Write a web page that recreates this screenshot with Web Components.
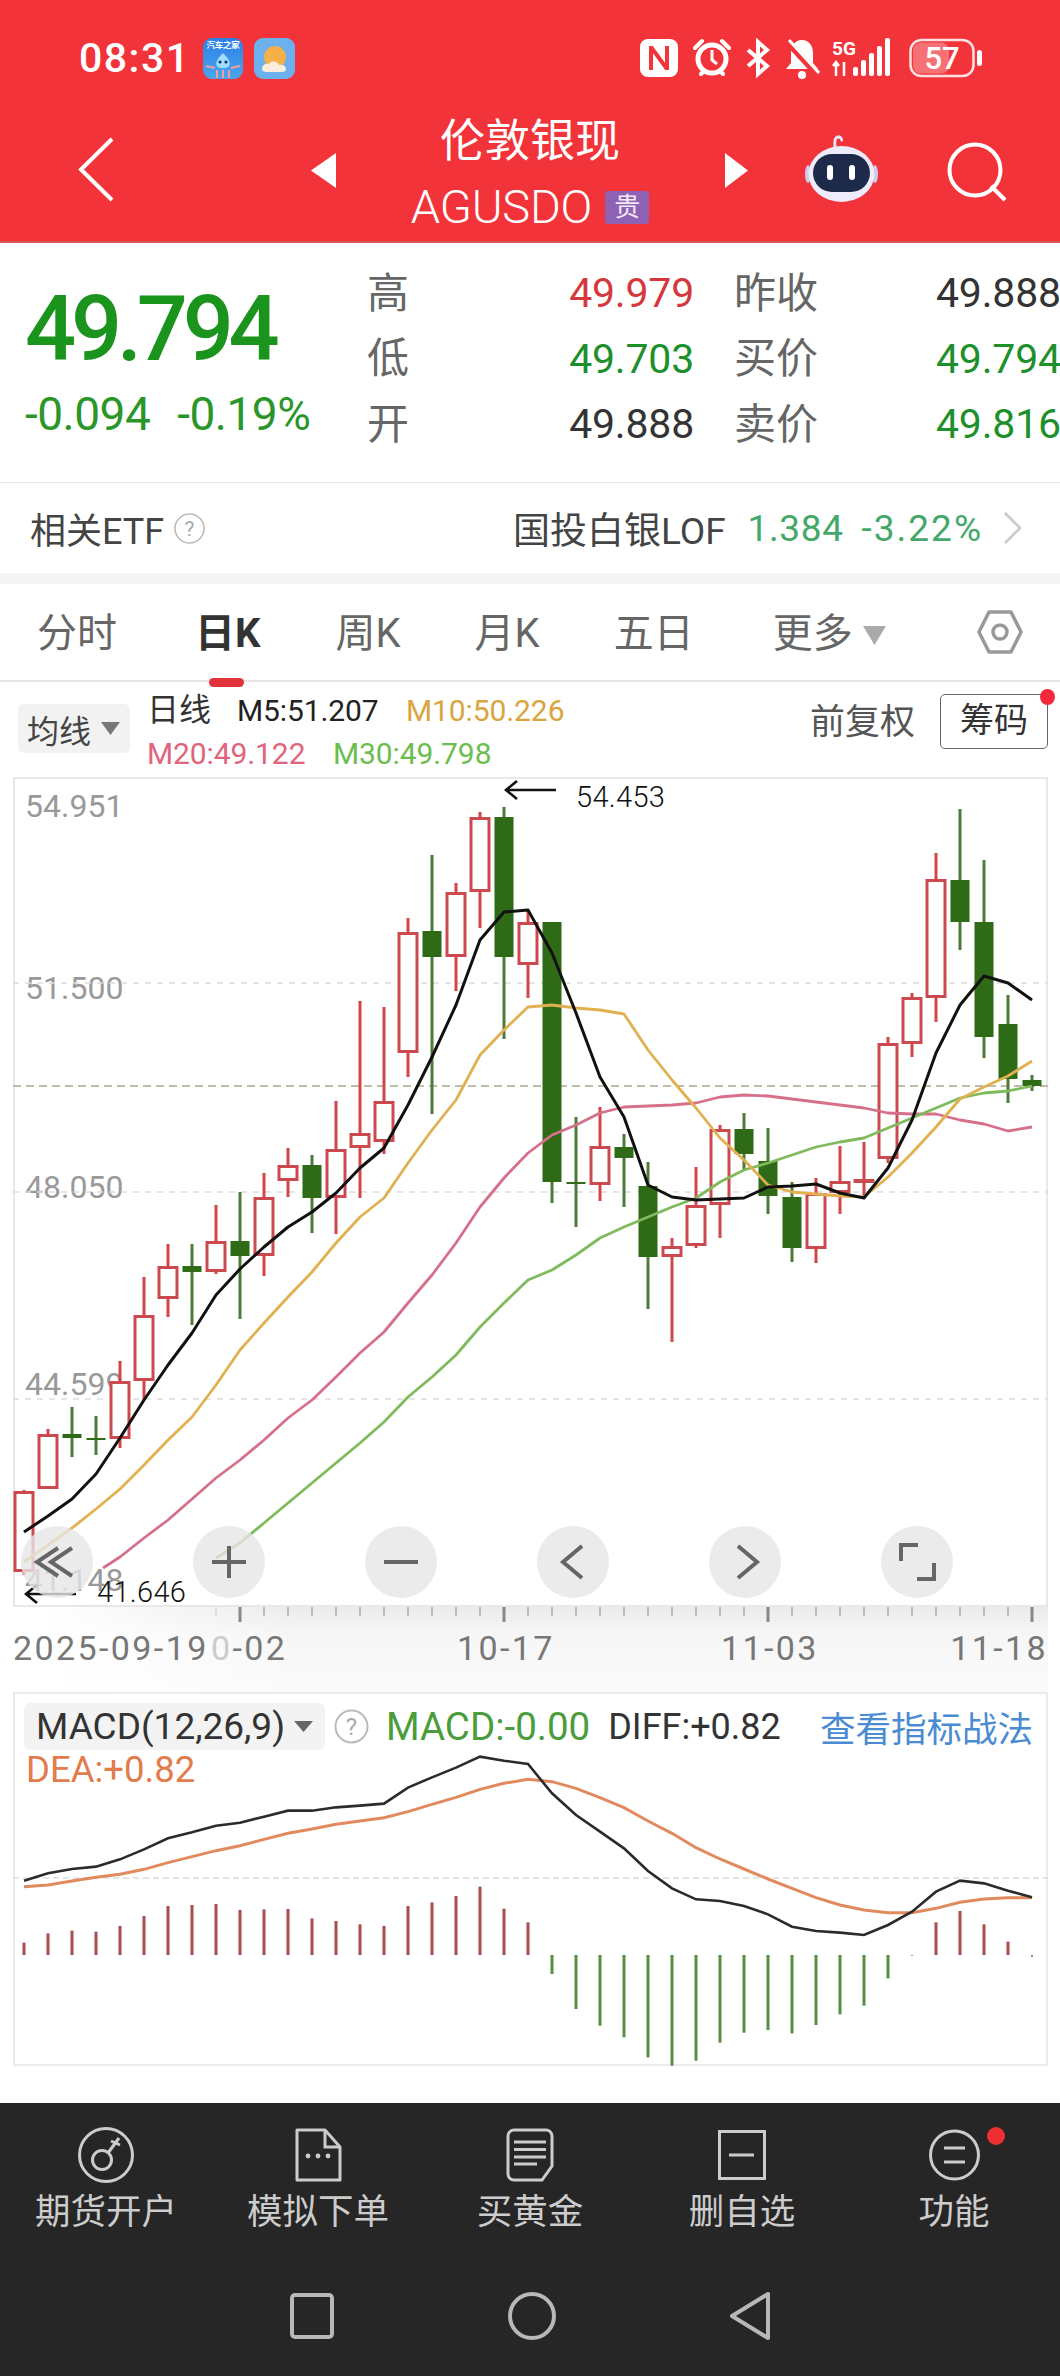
<!DOCTYPE html>
<html lang="zh">
<head>
<meta charset="utf-8">
<title>AGUSDO</title>
<style>
  html, body { margin: 0; padding: 0; background: #fff; }
  body { width: 1060px; height: 2376px; overflow: hidden; font-family: Roboto, "Noto Sans CJK SC", sans-serif; }
</style>
</head>
<body>
<app-header></app-header>
<quote-panel></quote-panel>
<etf-row></etf-row>
<period-tabs></period-tabs>
<ma-legend></ma-legend>
<kline-chart></kline-chart>
<date-axis></date-axis>
<macd-panel></macd-panel>
<bottom-tools></bottom-tools>
<system-nav></system-nav>

<script>
// every element just gets its css + markup in an open shadow root
class Box extends HTMLElement {
  constructor(css, html) {
    super();
    const shadow = this.attachShadow({mode: 'open'});
    const newStyle = document.createElement('style');
    newStyle.textContent = `:host { box-sizing: border-box; } * { box-sizing: border-box; margin: 0; padding: 0; font-family: Roboto, "Noto Sans CJK SC", sans-serif; }` + css;
    shadow.appendChild(newStyle);
    const holder = document.createElement('template');
    holder.innerHTML = html;
    shadow.appendChild(holder.content);
  }
}

const slot = (n) => 24 + 24 * n;   // x of candle n on the page
const poly = (start, ys) => ys.map((y, i) => slot(start + i) + ',' + y).join(' ');

class AppHeader extends Box {
  constructor() {
    super(`
      :host { display: block; height: 243px; background: #f2343a; color: #fff; border-bottom: 2px solid #d8555a; }
      .status { height: 100px; display: flex; align-items: center; padding: 16px 76px 0 79px; }
      .time { font-size: 41px; font-weight: 500; letter-spacing: 1.5px; line-height: 1; width: 124px; }
      .apps { display: flex; gap: 11px; }
      .right { margin-left: auto; display: flex; align-items: center; }
      .car { width: 40px; height: 41px; border-radius: 9px; background: linear-gradient(#2d7fe6, #4aa6ee); position: relative; overflow: hidden; font-size: 8.5px; font-weight: 700; text-align: center; line-height: 15px; letter-spacing: -.3px; }
      .nav { height: 141px; display: flex; align-items: flex-start; padding-left: 78px; }
      .back { width: 233px; padding-top: 37px; }
      .tri-l { width: 100px; padding-top: 53px; }
      .mid { width: 238px; text-align: center; display: flex; flex-direction: column; align-items: center; }
      .title { font-size: 45px; line-height: 44px; margin-top: 20px; }
      .code { display: flex; align-items: center; gap: 13px; margin-top: 25px; height: 36px; white-space: nowrap; }
      .code b { font-weight: 300; font-size: 47px; line-height: 36px; letter-spacing: -.2px; }
      .tag { width: 44px; height: 33px; background: #8d62b5; border-radius: 3px; font-size: 26px; line-height: 33px; color: #f3e9f7; }
      .tri-r { margin-left: 76px; width: 80px; padding-top: 53px; }
      .bot { width: 142px; padding-top: 34px; }
      .search { padding-top: 42px; }
      svg { display: block; }
    `, `
      <div class="status">
        <span class="time">08:31</span>
        <div class="apps">
          <div class="car">汽车之家
            <svg width="40" height="26" viewBox="0 0 40 26" style="position:absolute;left:0;top:15px"><path d="M20 0c6 6 8 10 6 13-2 3-10 3-12 0-2-3 0-7 6-13z" fill="#9fdcff"/><path d="M3 13l9 2M37 13l-9 2M14 17v8M20 17v8M26 17v8" stroke="#f2a0a0" stroke-width="2"/><circle cx="17" cy="9" r="1.6" fill="#12386a"/><circle cx="23" cy="9" r="1.6" fill="#12386a"/></svg>
          </div>
          <svg width="41" height="41" viewBox="0 0 41 41"><rect width="41" height="41" rx="9" fill="#6cb0ee"/><circle cx="21" cy="19" r="11" fill="#f6b04a"/><path d="M8 31c0-4 4-6 7-5 2-4 9-3 10 1 4-1 7 1 7 4 0 2-2 3-4 3H12c-2 0-4-1-4-3z" fill="#fbeedc"/></svg>
        </div>
        <div class="right">
          <svg width="38" height="40" viewBox="0 0 38 40" style="margin-right:15px"><rect x="0" y="1" width="38" height="38" rx="8" fill="#fff"/><path d="M11 8v24M27 8v24M11 9l16 22" fill="none" stroke="#f2343a" stroke-width="4"/></svg>
          <svg width="38" height="40" viewBox="0 0 38 40" style="margin-right:14px"><circle cx="19" cy="21" r="14" fill="none" stroke="#fff" stroke-width="5"/><path d="M19 12v10l5 4" fill="none" stroke="#fff" stroke-width="3"/><path d="M2 10l7-7M36 10l-7-7M8 36l3-3M30 36l-3-3" stroke="#fff" stroke-width="4" stroke-linecap="round"/></svg>
          <svg width="26" height="40" viewBox="0 0 26 40" style="margin-right:13px"><path d="M3 12l19 16-9 8V4l9 8L3 28" fill="none" stroke="#fff" stroke-width="4"/></svg>
          <svg width="36" height="42" viewBox="0 0 36 42" style="margin-right:12px"><path d="M18 3c7 0 11 6 11 13v10l5 6H2l5-6V16C7 9 11 3 18 3z" fill="#fff"/><circle cx="18" cy="38" r="4" fill="#fff"/><path d="M2 3l31 34" stroke="#f2343a" stroke-width="7"/><path d="M5 3l30 33" stroke="#fff" stroke-width="3"/></svg>
          <svg width="61" height="40" viewBox="0 0 61 40" style="margin-right:16px">
            <text x="0" y="17" font-size="19" font-weight="700" fill="#fff" font-family="Roboto">5G</text>
            <path d="M4 24v14M1 28l3-4 3 4M12 24v14" stroke="#fff" stroke-width="2.5" fill="none"/>
            <rect x="21" y="29" width="5" height="9" rx="2" fill="#fff"/><rect x="29" y="22" width="5" height="16" rx="2" fill="#fff"/><rect x="37" y="15" width="5" height="23" rx="2" fill="#fff"/><rect x="45" y="8" width="5" height="30" rx="2" fill="#fff"/><rect x="53" y="0" width="5" height="38" rx="2" fill="#fff"/>
          </svg>
          <svg width="75" height="40" viewBox="0 0 75 40">
            <rect x="1.5" y="2" width="63" height="36" rx="11" fill="none" stroke="#fff" stroke-width="2.5" opacity=".85"/>
            <rect x="4" y="4.5" width="36" height="31" rx="8" fill="#fff" opacity=".3"/>
            <text x="33" y="31" text-anchor="middle" font-size="31" font-weight="500" fill="#fff" font-family="Roboto">57</text>
            <rect x="68" y="12" width="5" height="16" rx="2.5" fill="#fff"/>
          </svg>
        </div>
      </div>
      <div class="nav">
        <div class="back"><svg width="36" height="65" viewBox="0 0 36 65"><path d="M34 2L3 32.5 34 63" fill="none" stroke="#fff" stroke-width="4"/></svg></div>
        <div class="tri-l"><svg width="25" height="35" viewBox="0 0 25 35"><path d="M25 0v35L0 17.5z" fill="#fff"/></svg></div>
        <div class="mid">
          <div class="title">伦敦银现</div>
          <div class="code"><b>AGUSDO</b><span class="tag">贵</span></div>
        </div>
        <div class="tri-r"><svg width="23" height="35" viewBox="0 0 23 35"><path d="M0 0v35l23-17.5z" fill="#fff"/></svg></div>
        <div class="bot"><svg width="73" height="68" viewBox="0 0 73 68">
          <path d="M30 14c0-5-1-8 1-10 3-3 7 1 5 3" fill="none" stroke="#e6e4f6" stroke-width="3"/>
          <ellipse cx="3" cy="40" rx="3" ry="9" fill="#cfcbee"/><ellipse cx="70" cy="40" rx="3" ry="9" fill="#cfcbee"/>
          <ellipse cx="36.5" cy="40" rx="33" ry="28" fill="#eeecfb"/>
          <rect x="8" y="20" width="57" height="38" rx="19" fill="#1d2a4a"/>
          <rect x="22" y="31" width="6" height="15" rx="3" fill="#fff"/><rect x="44" y="31" width="6" height="15" rx="3" fill="#fff"/>
        </svg></div>
        <div class="search"><svg width="60" height="60" viewBox="0 0 60 60"><circle cx="28" cy="28" r="25.5" fill="none" stroke="#fff" stroke-width="4"/><path d="M44 44l14 14" stroke="#fff" stroke-width="4"/></svg></div>
      </div>
    `);
  }
}

class QuotePanel extends Box {
  constructor() {
    super(`
      :host { display: flex; height: 240px; padding-left: 25px; background: #fff; border-bottom: 1px solid #e6e6e6; overflow: hidden; }
      .now { width: 342px; flex: none; padding-top: 37px; color: #1a941c; }
      .price { font-size: 90px; font-weight: 500; line-height: 100px; letter-spacing: -5.2px; }
      .diff { display: flex; gap: 27px; font-size: 46px; line-height: 48px; margin-top: 10px; letter-spacing: -.5px; color: #2a962a; }
      .grid { display: grid; grid-template-columns: 60px 267px 242px 124px; grid-auto-rows: 65.5px; padding: 18px 0 0 0; align-items: center; }
      .l { font-size: 42px; color: #666; line-height: 1; }
      .v { font-size: 41px; text-align: right; letter-spacing: -.2px; line-height: 1; }
      .lb { margin-left: 40px; white-space: nowrap; }
      .vb { text-align: left; white-space: nowrap; }
      .red { color: #d5383c; } .grn { color: #1d8f2b; } .blk { color: #333; }
    `, `
      <div class="now">
        <div class="price">49.794</div>
        <div class="diff"><span>-0.094</span><span>-0.19%</span></div>
      </div>
      <div class="grid">
        <span class="l">高</span><span class="v red">49.979</span><span class="l lb">昨收</span><span class="v vb blk">49.888</span>
        <span class="l">低</span><span class="v grn">49.703</span><span class="l lb">买价</span><span class="v vb grn">49.794</span>
        <span class="l">开</span><span class="v blk">49.888</span><span class="l lb">卖价</span><span class="v vb grn">49.816</span>
      </div>
    `);
  }
}

class EtfRow extends Box {
  constructor() {
    super(`
      :host { display: flex; align-items: center; height: 101px; padding: 0 38px 0 30px; border-bottom: 11px solid #f4f4f4; font-size: 36px; color: #444; }
      .help { margin-left: 10px; }
      .name { margin-left: auto; font-size: 37px; }
      .num { margin-left: 22px; color: #44a86a; font-size: 37px; letter-spacing: .6px; }
      .pct { margin-left: 18px; color: #44a86a; font-size: 37px; letter-spacing: 2px; }
      .arr { margin-left: 21px; }
    `, `
      <span>相关ETF</span>
      <svg class="help" width="31" height="31" viewBox="0 0 31 31"><circle cx="15.5" cy="15.5" r="14.5" fill="none" stroke="#bbb" stroke-width="1.6"/><text x="15.5" y="23" text-anchor="middle" font-size="21" fill="#aaa" font-family="Roboto">?</text></svg>
      <span class="name">国投白银LOF</span>
      <span class="num">1.384</span>
      <span class="pct">-3.22%</span>
      <svg class="arr" width="18" height="32" viewBox="0 0 18 32"><path d="M1 1l15 15L1 31" fill="none" stroke="#ccc" stroke-width="3"/></svg>
    `);
  }
}

class PeriodTabs extends Box {
  constructor() {
    super(`
      :host { display: flex; align-items: center; position: relative; height: 98px; padding: 0 37px 0 37px; border-bottom: 2px solid #e4e4e4; font-size: 40px; color: #666; }
      span { line-height: 1; padding-top: 4px; }
      .on { font-weight: 700; color: #333; margin-left: 78px; position: relative; }
      .on::after { content: ""; position: absolute; left: 14px; width: 35px; height: 9px; bottom: -33px; border-radius: 5px; background: #e0343a; }
      .t3 { margin-left: 75px; } .t4 { margin-left: 74px; } .t5 { margin-left: 74px; } .t6 { margin-left: 79px; }
      .drop { margin-left: 10px; margin-top: 6px; }
      .hex { margin-left: auto; }
    `, `
      <span>分时</span>
      <span class="on">日K</span>
      <span class="t3">周K</span>
      <span class="t4">月K</span>
      <span class="t5">五日</span>
      <span class="t6">更多</span>
      <svg class="drop" width="23" height="19" viewBox="0 0 23 19"><path d="M0 0h23L11.5 19z" fill="#aaa"/></svg>
      <svg class="hex" width="46" height="46" viewBox="0 0 46 46"><path d="M12 3h22l10 20-10 20H12L2 23z" fill="none" stroke="#999" stroke-width="3.5" stroke-linejoin="round"/><circle cx="23" cy="23" r="7" fill="none" stroke="#999" stroke-width="3.5"/></svg>
    `);
  }
}

class MaLegend extends Box {
  constructor() {
    super(`
      :host { display: flex; height: 95px; padding: 0 12px 0 18px; position: relative; }
      .kind { width: 112px; height: 49px; margin-top: 22px; padding-left: 9px; border-radius: 6px; background: #f2f2f2; display: flex; align-items: center; gap: 10px; font-size: 32px; color: #444; }
      .vals { margin-left: 17px; padding-top: 7px; font-size: 30px; line-height: 43px; }
      .row { display: flex; white-space: nowrap; letter-spacing: -.1px; }
      .d { font-size: 32px; color: #333; width: 90px; }
      .m5 { color: #222; width: 169px; } .m10 { color: #d9a441; }
      .m20 { color: #e0647c; width: 186px; } .m30 { color: #6cbd4f; }
      .fq { margin-left: auto; margin-top: 17px; font-size: 35px; line-height: 48px; height: 48px; color: #555; }
      .chip { margin: 12px 0 0 25px; width: 108px; height: 55px; border: 1.5px solid #666; border-radius: 5px; font-size: 34px; line-height: 50px; text-align: center; color: #333; position: relative; }
      .chip::after { content: ""; position: absolute; top: -6px; right: -8px; width: 15px; height: 16px; border-radius: 50%; background: #f2293a; }
    `, `
      <div class="kind">均线<svg width="19" height="13" viewBox="0 0 19 13"><path d="M0 0h19L9.5 13z" fill="#777"/></svg></div>
      <div class="vals">
        <div class="row"><span class="d">日线</span><span class="m5">M5:51.207</span><span class="m10">M10:50.226</span></div>
        <div class="row"><span class="m20">M20:49.122</span><span class="m30">M30:49.798</span></div>
      </div>
      <span class="fq">前复权</span>
      <div class="chip">筹码</div>
    `);
  }
}

// [colour, high, body top, body bottom, low] in page pixels
const candles = [
  ['r',1490,1491,1572,1575],['r',1429,1434,1489,1489],['g',1407,1434,1438,1457],['g',1416,1438,1440,1455],
  ['r',1361,1381,1439,1448],['r',1277,1315,1381,1400],['r',1244,1266,1299,1317],['g',1244,1266,1272,1325],
  ['r',1205,1241,1272,1274],['g',1192,1241,1256,1319],['r',1173,1197,1256,1276],['r',1148,1165,1181,1197],
  ['g',1155,1165,1198,1233],['r',1101,1149,1198,1234],['r',1001,1133,1148,1198],['r',1007,1101,1142,1154],
  ['r',918,932,1053,1077],['g',855,931,957,1114],['r',883,892,957,991],['r',812,817,892,928],
  ['g',807,817,957,1039],['r',910,922,965,998],['g',922,922,1182,1203],['g',1117,1182,1183,1227],
  ['r',1107,1146,1185,1201],['g',1134,1147,1158,1207],['g',1162,1186,1257,1309],['r',1238,1246,1257,1342],
  ['r',1167,1205,1246,1248],['r',1125,1129,1205,1238],['g',1113,1129,1154,1170],['g',1128,1161,1196,1214],
  ['g',1182,1197,1248,1262],['r',1178,1193,1249,1263],['r',1146,1181,1193,1214],['r',1142,1179,1181,1197],
  ['r',1037,1043,1159,1163],['r',993,997,1044,1057],['r',853,879,998,1022],['g',809,880,922,950],
  ['g',860,922,1037,1058],['g',995,1024,1079,1103],['g',1075,1080,1086,1091]
];
const ma5 = [1532,1516,1499,1474,1438,1400,1365,1333,1295,1269,1247,1227,1212,1193,1168,1148,1105,1057,1005,940,912,910,953,1013,1077,1117,1185,1197,1200,1199,1198,1187,1186,1184,1193,1198,1168,1120,1053,1005,976,983,1000];
const ma10 = [1562,1545,1528,1509,1489,1465,1440,1417,1385,1350,1323,1297,1272,1243,1217,1198,1163,1130,1100,1055,1030,1007,1005,1008,1010,1014,1050,1080,1108,1138,1160,1185,1192,1194,1196,1197,1177,1153,1127,1099,1087,1076,1061];
const ma20 = [1557,1538,1520,1499,1478,1460,1440,1418,1400,1377,1353,1332,1303,1275,1243,1207,1178,1153,1135,1125,1113,1107,1106,1105,1103,1097,1095,1096,1099,1102,1105,1108,1113,1114,1114,1120,1124,1131,1127];
const ma30 = [1558,1543,1523,1503,1483,1463,1443,1422,1397,1377,1355,1327,1303,1280,1270,1255,1238,1227,1217,1207,1198,1182,1170,1163,1155,1147,1142,1138,1128,1118,1108,1098,1093,1091,1086];

class KlineChart extends Box {
  constructor() {
    let marks = '';
    candles.forEach((c, i) => {
      const x = slot(i), red = c[0] === 'r';
      marks += `<line x1="${x}" x2="${x}" y1="${c[1]}" y2="${c[4]}" stroke="${red ? '#d2464a' : '#4f7a3a'}" stroke-width="3"/>`;
      if (red) marks += `<rect x="${x - 9}" y="${c[2] + 1.5}" width="18" height="${Math.max(c[3] - c[2] - 3, 1)}" fill="#fff" stroke="#cb4a4f" stroke-width="3"/>`;
      else marks += `<rect x="${x - 9.5}" y="${c[2]}" width="19" height="${Math.max(c[3] - c[2], 2)}" fill="#2f6a17"/>`;
    });
    const btn = (x, path) => `<svg class="btn" style="left:${x - 36 - 15}px" width="72" height="72" viewBox="0 0 72 72"><circle cx="36" cy="36" r="36" fill="#e6e6e6" fill-opacity=".8"/><path d="${path}" fill="none" stroke="#666" stroke-width="4"/></svg>`;
    super(`
      :host { display: block; position: relative; height: 830px; margin: 0 12px 0 13px; border: 2px solid #e8e8e8; }
      svg.plot { position: absolute; left: -2px; top: -2px; z-index: 1; }
      .y { position: absolute; left: 10px; font-size: 32px; line-height: 32px; color: #999; z-index: 0; }
      .tip { position: absolute; font-size: 29px; line-height: 30px; color: #111; font-weight: 300; z-index: 2; letter-spacing: .3px; }
      .btn { position: absolute; top: 747px; z-index: 2; }
      .arrow { position: absolute; z-index: 2; }
    `, `
      <span class="y" style="top:11px">54.951</span>
      <span class="y" style="top:193px">51.500</span>
      <span class="y" style="top:392px">48.050</span>
      <span class="y" style="top:589px">44.599</span>
      <span class="y" style="top:785px">41.148</span>
      <svg class="plot" width="1035" height="830" viewBox="13 777 1035 830">
        <line x1="13" x2="1048" y1="983" y2="983" stroke="#ddd" stroke-width="1.5" stroke-dasharray="6 6"/>
        <line x1="13" x2="1048" y1="1192" y2="1192" stroke="#ddd" stroke-width="1.5" stroke-dasharray="6 6"/>
        <line x1="13" x2="1048" y1="1399" y2="1399" stroke="#ddd" stroke-width="1.5" stroke-dasharray="6 6"/>
        <line x1="13" x2="1048" y1="1086" y2="1086" stroke="#aaa68e" stroke-width="1.6" stroke-dasharray="8 5"/>
        ${marks}
        <g fill="none" stroke-linejoin="round">
          <polyline points="103,1568 ${poly(4, ma20)}" stroke="#d6708a" stroke-width="2.8"/>
          <polyline points="${poly(8, ma30)}" stroke="#7fba5c" stroke-width="2.8"/>
          <polyline points="${poly(0, ma10)}" stroke="#e1b050" stroke-width="2.8"/>
          <polyline points="${poly(0, ma5)}" stroke="#111" stroke-width="3"/>
        </g>
      </svg>
      <svg class="arrow" style="left:489px;top:0" width="52" height="22" viewBox="0 0 52 22"><path d="M52 11H3M13 2L2 11l11 9" fill="none" stroke="#111" stroke-width="2.6"/></svg>
      <span class="tip" style="left:561px;top:3px">54.453</span>
      <svg class="arrow" style="left:9px;top:804px" width="52" height="22" viewBox="0 0 52 22"><path d="M52 11H3M13 2L2 11l11 9" fill="none" stroke="#111" stroke-width="2.6"/></svg>
      <span class="tip" style="left:82px;top:798px">41.646</span>
      ${btn(57, 'M51 22L30 36 51 50M37 22L16 36 37 50')}
      ${btn(229, 'M36 20v32M19 36h34')}
      ${btn(401, 'M19 36h34')}
      ${btn(573, 'M45 20L26 36l19 16')}
      ${btn(745, 'M29 20l19 16-19 16')}
      ${btn(917, 'M20 35V19h17M53 37v16H36')}
    `);
  }
}

class DateAxis extends Box {
  constructor() {
    let ticks = '';
    for (let n = 8; n <= 42; n++) {
      const major = n === 9 || n === 20 || n === 31 || n === 42;
      const op = n === 8 ? .35 : 1;
      ticks += `<line x1="${slot(n)}" x2="${slot(n)}" y1="0" y2="${major ? 15 : 9}" stroke="${major ? '#888' : '#aaa'}" stroke-width="${major ? 3 : 1.5}" opacity="${op}"/>`;
    }
    super(`
      :host { display: block; position: relative; height: 85px; overflow: hidden; }
      .bg { position: absolute; inset: 0 12px 0 0; background: linear-gradient(#ebebeb, #f6f6f6 32%, #fbfbfb); -webkit-mask-image: linear-gradient(90deg, transparent 40px, #000 300px); mask-image: linear-gradient(90deg, transparent 40px, #000 300px); }
      svg { position: absolute; left: 0; top: 0; }
      span { position: absolute; top: 24px; font-size: 34px; line-height: 34px; color: #777; letter-spacing: 2.4px; white-space: nowrap; }
      i { font-style: normal; color: #ccc; }
    `, `
      <div class="bg"></div>
      <svg width="1060" height="20" viewBox="0 0 1060 20">${ticks}</svg>
      <span style="left:13px">2025-09-19</span>
      <span style="left:211px"><i>0</i>-02</span>
      <span style="left:457px">10-17</span>
      <span style="left:721px">11-03</span>
      <span style="right:12px">11-18</span>
    `);
  }
}

const macdTops = [818,790,782,785,768,738,708,705,702,720,718,717,745,753,763,768,708,697,678,650,716,757];
const macdBottoms = [912,1017,1067,1102,1162,1187,1172,1118,1088,1080,1090,1065,1033,1007,925];
const macdLate = [[37,857,'g'],[38,757,'r'],[39,723,'r'],[40,763,'r'],[41,815,'r'],[42,860,'g']];
const difLine = [632,610,597,590,568,538,505,487,467,458,440,422,422,412,407,401,353,322,293,260,272,282,370,435,485,535,603,655,688,693,708,733,770,783,788,795,765,725,665,632,640,662,682];
const deaLine = [650,645,633,622,613,598,578,560,542,527,508,490,477,463,453,443,425,403,382,358,340,328,335,355,383,413,453,490,533,567,597,627,655,683,705,720,728,728,715,697,687,683,683];

class MacdPanel extends Box {
  constructor() {
    // all the z values were read off a 3x crop that starts at y=1670
    const yy = (z) => 1670 + z / 3;
    let bars = '';
    macdTops.forEach((t, i) => { bars += `<line x1="${slot(i)}" x2="${slot(i)}" y1="${yy(t)}" y2="1955" stroke="#a44f4f" stroke-width="3"/>`; });
    macdBottoms.forEach((b, i) => { bars += `<line x1="${slot(22 + i)}" x2="${slot(22 + i)}" y1="1955" y2="${yy(b)}" stroke="#558f42" stroke-width="3"/>`; });
    macdLate.forEach(m => { bars += `<line x1="${slot(m[0])}" x2="${slot(m[0])}" y1="${yy(m[1])}" y2="1955" stroke="${m[2] === 'r' ? '#a44f4f' : '#555'}" stroke-width="${m[2] === 'r' ? 3 : 1.5}"/>`; });
    super(`
      :host { display: block; position: relative; height: 374px; margin: 0 12px 0 13px; border: 2px solid #ececec; }
      svg.plot { position: absolute; left: -2px; top: -2px; }
      .head { position: relative; display: flex; align-items: center; padding: 9px 0 0 9px; height: 56px; white-space: nowrap; }
      .pill { display: flex; align-items: center; gap: 9px; width: 301px; height: 47px; padding-left: 12px; border-radius: 6px; background: #f3f3f3; font-size: 37px; color: #333; }
      .q { margin-left: 9px; }
      .macd { margin-left: 17px; font-size: 38.5px; color: #4b9c3b; }
      .dif { margin-left: 18px; font-size: 36px; color: #333; }
      .see { margin-left: auto; margin-right: 13px; font-size: 35.5px; color: #4b8bd2; }
      .dea { position: relative; margin: 3px 0 0 11px; font-size: 36.5px; line-height: 34px; color: #e27c4c; }
    `, `
      <svg class="plot" width="1035" height="374" viewBox="13 1692 1035 374">
        <line x1="13" x2="1048" y1="1878" y2="1878" stroke="#d5dedd" stroke-width="1.4" stroke-dasharray="6 4"/>
        ${bars}
        <polyline points="${deaLine.map((z, i) => slot(i) + ',' + yy(z)).join(' ')}" fill="none" stroke="#e08a5e" stroke-width="3"/>
        <polyline points="${difLine.map((z, i) => slot(i) + ',' + yy(z)).join(' ')}" fill="none" stroke="#2b2b2b" stroke-width="2.6"/>
      </svg>
      <div class="head">
        <div class="pill">MACD(12,26,9)<svg width="19" height="11" viewBox="0 0 19 11"><path d="M0 0h19L9.5 11z" fill="#666"/></svg></div>
        <svg class="q" width="35" height="35" viewBox="0 0 35 35"><circle cx="17.5" cy="17.5" r="16" fill="none" stroke="#bbb" stroke-width="2"/><text x="17.5" y="26" text-anchor="middle" font-size="24" fill="#aaa" font-family="Roboto">?</text></svg>
        <span class="macd">MACD:-0.00</span>
        <span class="dif">DIFF:+0.82</span>
        <span class="see">查看指标战法</span>
      </div>
      <div class="dea">DEA:+0.82</div>
    `);
  }
}

class BottomTools extends Box {
  constructor() {
    const s = 'fill="none" stroke="#ccc" stroke-width="3"';
    const item = (icon, text, extra) => `<div class="tool"><div class="ic">${icon}${extra || ''}</div><span>${text}</span></div>`;
    super(`
      :host { display: grid; grid-template-columns: repeat(5, 212px); height: 153px; margin-top: 37px; padding-top: 22px; background: #262626; }
      .tool { display: flex; flex-direction: column; align-items: center; }
      .ic { position: relative; height: 60px; display: flex; align-items: center; justify-content: center; }
      span { font-size: 35.5px; line-height: 40px; margin-top: 7px; color: #ccc; white-space: nowrap; }
      .dot { position: absolute; left: 58px; top: 2px; width: 18px; height: 18px; border-radius: 50%; background: #ee2e33; }
    `, `
      ${item(`<svg width="56" height="58" viewBox="0 0 56 58"><circle cx="28" cy="29" r="26.5" ${s}/><circle cx="24" cy="34" r="9.5" ${s}/><path d="M30 27l11-15M33 15l9 4" ${s}/></svg>`, '期货开户')}
      ${item(`<svg width="48" height="54" viewBox="0 0 48 54"><path d="M3 2h28l15 17v33H3z" ${s} stroke-linejoin="round"/><path d="M31 2v17h15" ${s}/><circle cx="14" cy="28" r="2.4" fill="#ccc"/><circle cx="24" cy="28" r="2.4" fill="#ccc"/><circle cx="34" cy="28" r="2.4" fill="#ccc"/></svg>`, '模拟下单')}
      ${item(`<svg width="48" height="54" viewBox="0 0 48 54"><path d="M8 2h32a6 6 0 0 1 6 6v30L36 52H8a6 6 0 0 1-6-6V8a6 6 0 0 1 6-6z" ${s}/><path d="M8 14h32M8 21.500h32M8 29h32M8 36h23" ${s}/></svg>`, '买黄金')}
      ${item(`<svg width="48" height="50" viewBox="0 0 48 50"><rect x="1.500" y="1.500" width="45" height="47" ${s}/><path d="M11 25h25" ${s}/></svg>`, '删自选')}
      ${item(`<svg width="51" height="52" viewBox="0 0 51 52"><circle cx="25.500" cy="26" r="24" ${s}/><path d="M15 19h21M15 33h21" ${s}/></svg>`, '功能', '<i class="dot"></i>')}
    `);
  }
}

class SystemNav extends Box {
  constructor() {
    super(`
      :host { display: flex; align-items: center; justify-content: center; gap: 174px; height: 120px; background: #262626; }
      svg { display: block; }
    `, `
      <svg width="44" height="46" viewBox="0 0 44 46"><rect x="2" y="2" width="40" height="42" rx="3" fill="none" stroke="#b8b8b8" stroke-width="4"/></svg>
      <svg width="48" height="48" viewBox="0 0 48 48"><circle cx="24" cy="24" r="22" fill="none" stroke="#b8b8b8" stroke-width="4"/></svg>
      <svg width="40" height="48" viewBox="0 0 40 48"><path d="M38 2v44L2 24z" fill="none" stroke="#b8b8b8" stroke-width="4" stroke-linejoin="round"/></svg>
    `);
  }
}

customElements.define('app-header', AppHeader);
customElements.define('quote-panel', QuotePanel);
customElements.define('etf-row', EtfRow);
customElements.define('period-tabs', PeriodTabs);
customElements.define('ma-legend', MaLegend);
customElements.define('kline-chart', KlineChart);
customElements.define('date-axis', DateAxis);
customElements.define('macd-panel', MacdPanel);
customElements.define('bottom-tools', BottomTools);
customElements.define('system-nav', SystemNav);
</script>
</body>
</html>
